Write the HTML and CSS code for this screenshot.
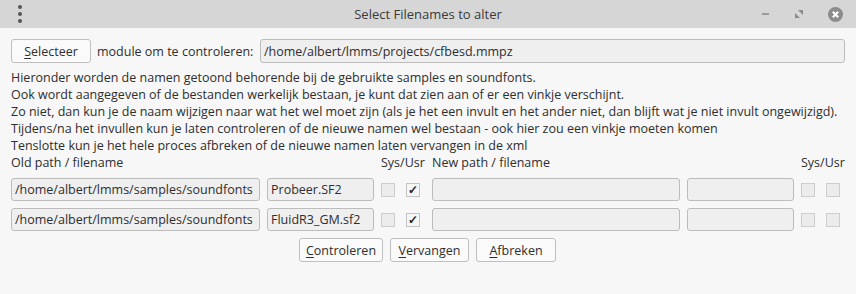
FILE: index.html
```html
<!DOCTYPE html>
<html>
<head>
<meta charset="utf-8">
<link rel="stylesheet" href="styles.css">
</head>
<body>
<div class="window">
  <div class="titlebar">
    <div class="kebab"><span></span><span></span><span></span></div>
    <div class="title">Select Filenames to alter</div>
    <div class="controls">
      <span class="min"></span>
      <svg class="restore" width="8" height="8" viewBox="0 0 8 8"><path d="M3 0H8V5Z M0 3V8H5Z" fill="#8c8c8c"/></svg>
      <span class="close"><svg width="14" height="14" viewBox="0 0 14 14"><path d="M4.5 4.5L9.5 9.5M9.5 4.5L4.5 9.5" stroke="#fff" stroke-width="2"/></svg></span>
    </div>
  </div>
  <div class="content">
    <div class="toprow">
      <button class="btn sel"><u>S</u>electeer</button>
      <span class="lbl">module om te controleren:</span>
      <div class="field wide">/home/albert/lmms/projects/cfbesd.mmpz</div>
    </div>
    <div class="info">
      <div>Hieronder worden de namen getoond behorende bij de gebruikte samples en soundfonts.</div>
      <div>Ook wordt aangegeven of de bestanden werkelijk bestaan, je kunt dat zien aan of er een vinkje verschijnt.</div>
      <div>Zo niet, dan kun je de naam wijzigen naar wat het wel moet zijn (als je het een invult en het ander niet, dan blijft wat je niet invult ongewijzigd).</div>
      <div>Tijdens/na het invullen kun je laten controleren of de nieuwe namen wel bestaan - ook hier zou een vinkje moeten komen</div>
      <div>Tenslotte kun je het hele proces afbreken of de nieuwe namen laten vervangen in de xml</div>
    </div>
    <div class="grid">
      <div class="hdr span2">Old path / filename</div>
      <div class="hdr">Sys/Usr</div>
      <div class="hdr span2">New path / filename</div>
      <div class="hdr">Sys/Usr</div>

      <div class="field">/home/albert/lmms/samples/soundfonts</div>
      <div class="field">Probeer.SF2</div>
      <div class="cbs"><span class="cb"></span><span class="cb on">&#10003;</span></div>
      <div class="field"></div>
      <div class="field"></div>
      <div class="cbs"><span class="cb"></span><span class="cb"></span></div>

      <div class="field">/home/albert/lmms/samples/soundfonts</div>
      <div class="field">FluidR3_GM.sf2</div>
      <div class="cbs"><span class="cb"></span><span class="cb on">&#10003;</span></div>
      <div class="field"></div>
      <div class="field"></div>
      <div class="cbs"><span class="cb"></span><span class="cb"></span></div>
    </div>
    <div class="actions">
      <button class="btn act1"><u>C</u>ontroleren</button>
      <button class="btn act2"><u>V</u>ervangen</button>
      <button class="btn act3"><u>A</u>fbreken</button>
    </div>
  </div>
</div>
</body>
</html>
```
FILE: styles.css
```css
* { box-sizing: border-box; }
html, body { margin: 0; padding: 0; }
body {
  width: 856px;
  height: 294px;
  background: #f7f7f7;
  font-family: "Open Sans", "Noto Sans", sans-serif;
  font-size: 12.5px;
  color: #2e2e2e;
  overflow: hidden;
}
.titlebar {
  height: 28px;
  background: #d6d6d6;
  display: flex;
  align-items: center;
  position: relative;
}
.kebab {
  width: 40px;
  display: flex;
  flex-direction: column;
  align-items: center;
  gap: 3px;
}
.kebab span {
  width: 4px; height: 4px; border-radius: 50%;
  background: #555;
}
.title {
  flex: 1;
  text-align: center;
  font-size: 13px;
  color: #3a3a3a;
  margin-right: 40px;
}
.controls {
  position: absolute;
  right: 13px;
  top: 7px;
  display: flex;
  align-items: center;
  height: 14px;
}
.min { width: 7px; height: 2px; background: #9a9a9a; margin-right: 26px; }
.restore { margin-right: 25px; }
.close {
  width: 15px; height: 15px; border-radius: 50%;
  background: #8c8c8c;
  display: flex; align-items: center; justify-content: center;
}
.close svg { width: 15px; height: 15px; }
.content { padding: 11px 11px 0 11px; }
.toprow {
  display: flex;
  align-items: center;
  height: 24px;
}
.btn {
  font: inherit;
  color: #2e2e2e;
  background: #fafafa;
  border: 1px solid #bfbfbf;
  border-radius: 3px;
  height: 24px;
  padding: 0;
  display: flex;
  align-items: center;
  justify-content: center;
}
.btn u { text-decoration-thickness: 1px; text-underline-offset: 2px; }
.sel { width: 80px; }
.lbl { margin-left: 6px; width: 163px; white-space: nowrap; }
.field {
  background: #efefef;
  border: 1px solid #bcbcbc;
  border-radius: 3px;
  height: 24px;
  padding: 0 3px;
  display: flex;
  align-items: center;
  white-space: nowrap;
  overflow: hidden;
}
.wide { flex: 1; }
.info {
  margin-top: 6px;
  line-height: 17px;
  white-space: nowrap;
}
.grid {
  display: grid;
  grid-template-columns: 249px 107px 44px 248px 107px 44px;
  grid-template-rows: 17px 23px 23px;
  column-gap: 7px;
  row-gap: 7px;
}
.grid .field { height: 23px; }
.hdr { line-height: 17px; white-space: nowrap; }
.span2 { grid-column: span 2; }
.cbs {
  display: flex;
  align-items: center;
  gap: 11px;
}
.cb {
  width: 14px; height: 14px;
  background: #ececec;
  border: 1px solid #cdcdcd;
  display: flex; align-items: center; justify-content: center;
  font-size: 12px;
  font-weight: bold;
  color: #222;
  line-height: 1;
}
.cb.on { background: #f6f6f6; border-color: #c4c4c4; }
.actions {
  margin-top: 7px;
  display: flex;
  justify-content: center;
  gap: 7px;
  padding-right: 1px;
}
.act1 { width: 84px; }
.act2 { width: 79px; }
.act3 { width: 80px; }
```
